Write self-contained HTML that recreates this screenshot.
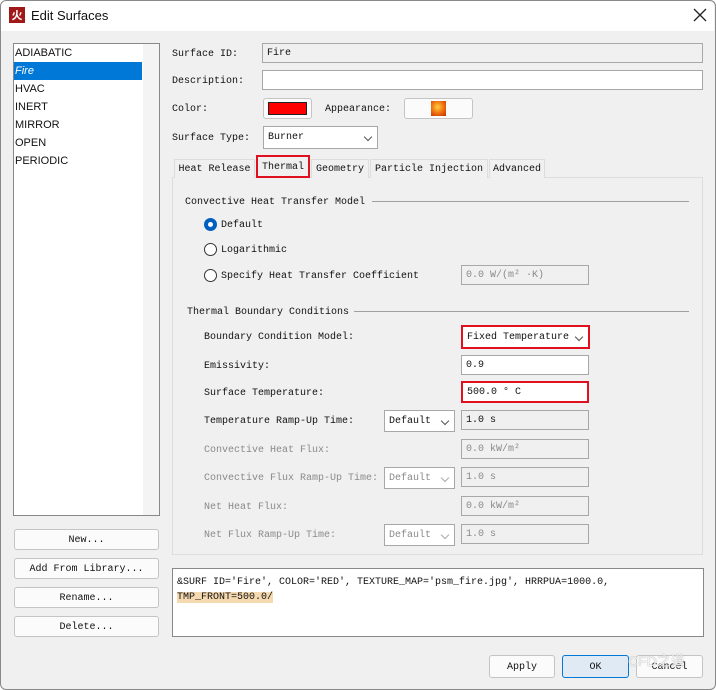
<!DOCTYPE html>
<html><head><meta charset="utf-8"><style>
*{box-sizing:border-box;margin:0;padding:0}
body{width:716px;height:690px;background:#fff;position:relative;overflow:hidden;font-family:"Liberation Mono","DejaVu Sans Mono",monospace;font-size:10px;color:#111}
.a{position:absolute}
.win{left:0;top:0;width:716px;height:690px;background:#f0f0f0;border:1px solid #888;border-radius:6px}
.title{left:1px;top:1px;width:713px;height:30px;background:#fff;border-radius:6px 6px 0 0}
.f{position:absolute;border:1px solid #a8a8a8;background:#fff;height:20px;line-height:18px;padding-left:4px;padding-top:1px;white-space:nowrap}
.g{background:#f0f0f0}
.dis{color:#8a8a8a}
.btn{position:absolute;border:1px solid #c4c4c4;border-radius:3px;background:#fbfbfb;text-align:center;line-height:19px;height:21px;padding-top:1px}
.sel{position:absolute;border:1px solid #a8a8a8;background:#fff;padding-left:4px;line-height:20px;height:22px;padding-top:1px}
.chev{position:absolute;right:6px;top:7px;width:6px;height:6px;border-right:1px solid #555;border-bottom:1px solid #555;transform:rotate(45deg)}
.tab{position:absolute;top:159px;height:19px;border:1px solid #ddd;border-bottom:none;line-height:18px;text-align:center;background:#f0f0f0;padding-top:1px}
.lab{position:absolute;white-space:nowrap;margin-top:2px}
.radio{position:absolute;width:13px;height:13px;border:1px solid #333;border-radius:50%;background:#fff}
.li{position:absolute;left:15px;font-family:"Liberation Sans",sans-serif;font-size:11px;margin-top:1px}
</style></head><body>
<div class="a win"></div>
<div class="a title"></div>
<div class="a" style="left:9px;top:7px;width:16px;height:16px;background:#a01818;color:#fff;font:bold 11px 'Noto Sans CJK SC',sans-serif;text-align:center;line-height:16px">火</div>
<div class="a" style="left:31px;top:8px;font:13px 'Liberation Sans',sans-serif">Edit Surfaces</div>
<svg class="a" style="left:693px;top:8px" width="14" height="14"><path d="M1 1L13 13M13 1L1 13" stroke="#222" stroke-width="1.3"/></svg>

<div class="a" style="left:13px;top:43px;width:147px;height:473px;background:#fff;border:1px solid #888"></div>
<div class="a" style="left:143px;top:44px;width:16px;height:471px;background:#f4f4f4"></div>
<div class="a" style="left:14px;top:62px;width:128px;height:18px;background:#0078d7"></div>
<div class="li" style="top:46px">ADIABATIC</div>
<div class="li" style="top:64px;color:#fff;font-style:italic">Fire</div>
<div class="li" style="top:82px">HVAC</div>
<div class="li" style="top:100px">INERT</div>
<div class="li" style="top:118px">MIRROR</div>
<div class="li" style="top:136px">OPEN</div>
<div class="li" style="top:154px">PERIODIC</div>

<div class="btn" style="left:14px;top:529px;width:145px">New...</div>
<div class="btn" style="left:14px;top:558px;width:145px">Add From Library...</div>
<div class="btn" style="left:14px;top:587px;width:145px">Rename...</div>
<div class="btn" style="left:14px;top:616px;width:145px">Delete...</div>

<div class="lab" style="left:172px;top:47px">Surface ID:</div>
<div class="f g" style="left:262px;top:43px;width:441px">Fire</div>
<div class="lab" style="left:172px;top:74px">Description:</div>
<div class="f" style="left:262px;top:70px;width:441px"></div>
<div class="lab" style="left:172px;top:102px">Color:</div>
<div class="btn" style="left:263px;top:98px;width:49px"></div>
<div class="a" style="left:268px;top:102px;width:39px;height:13px;background:#f00;border:1px solid #222"></div>
<div class="lab" style="left:325px;top:102px">Appearance:</div>
<div class="btn" style="left:404px;top:98px;width:69px"></div>
<div class="a" style="left:431px;top:101px;width:15px;height:15px;background:radial-gradient(circle at 45% 40%,#ffd040,#f07010 50%,#c03000)"></div>
<div class="lab" style="left:172px;top:131px">Surface Type:</div>
<div class="sel" style="left:263px;top:126px;width:115px;height:23px">Burner<span class="chev"></span></div>

<div class="a" style="left:172px;top:177px;width:531px;height:378px;border:1px solid #ddd;background:#f0f0f0"></div>
<div class="tab" style="left:174px;width:81px">Heat Release</div>
<div class="tab" style="left:256px;top:155px;height:23px;width:54px;border:2px solid #e01020;background:#f0f0f0;line-height:20px">Thermal</div>
<div class="tab" style="left:311px;width:58px">Geometry</div>
<div class="tab" style="left:370px;width:118px">Particle Injection</div>
<div class="tab" style="left:489px;width:56px">Advanced</div>

<div class="lab" style="left:185px;top:195px">Convective Heat Transfer Model</div>
<div class="a" style="left:372px;top:201px;width:317px;height:1px;background:#a0a0a0"></div>
<div class="radio" style="left:204px;top:218px;background:#0060c0;border-color:#0060c0"></div>
<div class="a" style="left:208px;top:222px;width:5px;height:5px;border-radius:50%;background:#fff"></div>
<div class="lab" style="left:221px;top:218px">Default</div>
<div class="radio" style="left:204px;top:243px"></div>
<div class="lab" style="left:221px;top:243px">Logarithmic</div>
<div class="radio" style="left:204px;top:269px"></div>
<div class="lab" style="left:221px;top:269px">Specify Heat Transfer Coefficient</div>
<div class="f g dis" style="left:461px;top:265px;width:128px">0.0 W/(m² ·K)</div>

<div class="lab" style="left:187px;top:305px">Thermal Boundary Conditions</div>
<div class="a" style="left:354px;top:311px;width:335px;height:1px;background:#a0a0a0"></div>
<div class="lab" style="left:204px;top:330px">Boundary Condition Model:</div>
<div class="sel" style="left:461px;top:325px;width:129px;height:24px;border:2px solid #e01020;line-height:20px">Fixed Temperature<span class="chev"></span></div>
<div class="lab" style="left:204px;top:359px">Emissivity:</div>
<div class="f" style="left:461px;top:355px;width:128px">0.9</div>
<div class="lab" style="left:204px;top:386px">Surface Temperature:</div>
<div class="f" style="left:461px;top:381px;width:128px;height:22px;border:2px solid #e01020">500.0 ° C</div>
<div class="lab" style="left:204px;top:414px">Temperature Ramp-Up Time:</div>
<div class="sel" style="left:384px;top:410px;width:71px">Default<span class="chev"></span></div>
<div class="f g" style="left:461px;top:410px;width:128px">1.0 s</div>
<div class="lab dis" style="left:204px;top:443px">Convective Heat Flux:</div>
<div class="f g dis" style="left:461px;top:439px;width:128px">0.0 kW/m²</div>
<div class="lab dis" style="left:204px;top:471px">Convective Flux Ramp-Up Time:</div>
<div class="sel dis" style="left:384px;top:467px;width:71px">Default<span class="chev" style="border-color:#aaa"></span></div>
<div class="f g dis" style="left:461px;top:467px;width:128px">1.0 s</div>
<div class="lab dis" style="left:204px;top:500px">Net Heat Flux:</div>
<div class="f g dis" style="left:461px;top:496px;width:128px">0.0 kW/m²</div>
<div class="lab dis" style="left:204px;top:528px">Net Flux Ramp-Up Time:</div>
<div class="sel dis" style="left:384px;top:524px;width:71px">Default<span class="chev" style="border-color:#aaa"></span></div>
<div class="f g dis" style="left:461px;top:524px;width:128px">1.0 s</div>

<div class="a" style="left:172px;top:568px;width:532px;height:69px;background:#fff;border:1px solid #888"></div>
<div class="lab" style="left:177px;top:575px">&amp;SURF ID='Fire', COLOR='RED', TEXTURE_MAP='psm_fire.jpg', HRRPUA=1000.0,</div>
<div class="lab" style="left:177px;top:590px;background:#f5d9b0">TMP_FRONT=500.0/</div>

<div class="btn" style="left:489px;top:655px;width:66px;height:23px;line-height:21px">Apply</div>
<div class="btn" style="left:562px;top:655px;width:67px;height:23px;line-height:21px;border-color:#0078d7;background:#e0eaf4">OK</div>
<div class="btn" style="left:636px;top:655px;width:67px;height:23px;line-height:21px">Cancel</div>
<div class="a" style="left:628px;top:651px;font:14px 'Liberation Sans','Noto Sans CJK SC',sans-serif;color:rgba(255,255,255,0.85);text-shadow:0 0 1px #888">CFD之道</div>
</body></html>
